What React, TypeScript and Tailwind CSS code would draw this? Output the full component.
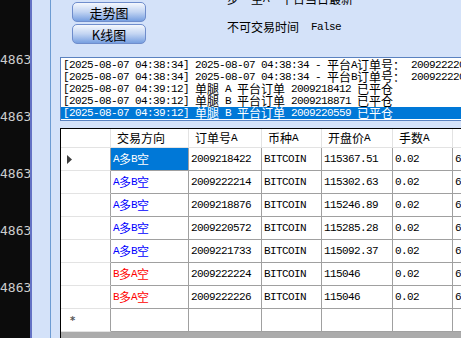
import React from 'react';

const CJK = /[\u2E80-\u9FFF\uFF00-\uFFEF]/;

// SimSun-like mixed run: CJK at 12px, ASCII as 6px-wide mono
const Sim: React.FC<{ t: string }> = ({ t }) => (
    <>
        {t.split(/([\u2E80-\u9FFF\uFF00-\uFFEF]+)/).map((s, i) =>
            s === '' ? null : CJK.test(s) ? (
                <span key={i} className="whitespace-pre font-['Noto_Sans_CJK_SC',sans-serif] text-[12px] leading-[12px]">{s}</span>
            ) : (
                <span key={i} className="whitespace-pre font-['Liberation_Mono',monospace] text-[11px] leading-[12px] tracking-[-0.6px]">{s}</span>
            )
        )}
    </>
);

const logLines = [
    '[2025-08-07 04:38:34] 2025-08-07 04:38:34 - 平台A订单号： 2009222206',
    '[2025-08-07 04:38:34] 2025-08-07 04:38:34 - 平台B订单号： 2009222207',
    '[2025-08-07 04:39:12] 单腿 A 平台订单 2009218412 已平仓',
    '[2025-08-07 04:39:12] 单腿 B 平台订单 2009218871 已平仓',
    '[2025-08-07 04:39:12] 单腿 B 平台订单 2009220559 已平仓',
];

const rows = [
    { dir: 'A多B空', red: false, id: '2009218422', price: '115367.51' },
    { dir: 'A多B空', red: false, id: '2009222214', price: '115302.63' },
    { dir: 'A多B空', red: false, id: '2009218876', price: '115246.89' },
    { dir: 'A多B空', red: false, id: '2009220572', price: '115285.28' },
    { dir: 'A多B空', red: false, id: '2009221733', price: '115092.37' },
    { dir: 'B多A空', red: true, id: '2009222224', price: '115046' },
    { dir: 'B多A空', red: true, id: '2009222226', price: '115046' },
];

const cols = 'grid grid-cols-[50px_78px_73px_60px_71px_60px_80px]';
const cell = 'border-r border-b border-[#a0a0a0] pl-[2px] flex items-center overflow-hidden';

export default function App() {
    return (
        <div className="w-[461px] h-[338px] overflow-hidden flex bg-[#d4e2f9]">
            {/* console strip */}
            <div className="w-[30px] shrink-0 bg-[#0c0c0c] overflow-hidden flex flex-col pt-[51px] gap-[39px]">
                {[0, 1, 2, 3, 4].map((i) => (
                    <div key={i} className="h-[18px] whitespace-nowrap font-['DejaVu_Sans_Mono',monospace] text-[13px] leading-[18px] text-[#cccccc]">
                        4863
                    </div>
                ))}
            </div>
            <div className="w-[2px] shrink-0 bg-[#6472c4]" />
            <div className="w-[18px] shrink-0" />
            <div className="w-px shrink-0 bg-[#6c9bd2]" />

            <div className="flex-1 min-w-0 flex flex-col">
                {/* top controls */}
                <div className="h-[57px] shrink-0 flex">
                    <div className="ml-[21px] pt-[2px] flex flex-col gap-[2px]">
                        {['走势图', 'K线图'].map((b) => (
                            <div
                                key={b}
                                className="w-[74px] h-[20px] rounded-[5px] border border-[#6f8dcc] bg-gradient-to-b from-[#f5f8fd] via-[#c2d4f2] to-[#779fe0] flex items-center justify-center font-['Noto_Sans_CJK_SC',sans-serif] text-[13px] leading-[13px] text-black"
                            >
                                {b}
                            </div>
                        ))}
                    </div>
                    <div className="ml-[81px] flex flex-col">
                        <div className="-mt-[7px] h-[12px] flex items-center text-black">
                            <Sim t="步  至A  平台当日最新" />
                        </div>
                        <div className="mt-[16px] h-[12px] flex items-center text-black">
                            <Sim t="不可交易时间  False" />
                        </div>
                    </div>
                </div>

                {/* log list */}
                <div className="ml-[9px] h-[64px] shrink-0 border border-r-0 border-[#5a82c0] bg-white pt-px overflow-hidden">
                    {logLines.map((l, i) => (
                        <div
                            key={i}
                            className={`h-[12px] pl-[2px] flex items-center overflow-hidden ${i === 4 ? 'bg-[#0078d7] text-white' : 'text-black'}`}
                        >
                            <Sim t={l} />
                        </div>
                    ))}
                </div>

                {/* data grid */}
                <div className="mt-[7px] ml-[9px] flex-1 border-l border-t border-black bg-[#ababab] overflow-hidden">
                    <div className={`${cols} h-[19px] bg-white`}>
                        <div className="border-r border-b border-[#e3e3e3]" />
                        {['交易方向', '订单号A', '币种A', '开盘价A', '手数A', ' 平仓价B'].map((h) => (
                            <div key={h} className="border-r border-b border-[#e3e3e3] pl-[6px] flex items-center overflow-hidden text-black">
                                <Sim t={h} />
                            </div>
                        ))}
                    </div>
                    {rows.map((r, i) => (
                        <div key={i} className={`${cols} h-[23px] bg-white`}>
                            <div className="border-r border-b border-[#e3e3e3] border-r-[#a0a0a0] flex items-center pl-[6px]">
                                {i === 0 && (
                                    <svg width="6" height="9" viewBox="0 0 6 9">
                                        <path d="M0 0 L5 4.5 L0 9 Z" fill="#3c3c3c" />
                                    </svg>
                                )}
                            </div>
                            <div className={`${cell} ${i === 0 ? 'bg-[#0078d7] text-white' : r.red ? 'text-[#ff0000]' : 'text-[#0000ff]'}`}>
                                <Sim t={r.dir} />
                            </div>
                            <div className={`${cell} text-black`}><Sim t={r.id} /></div>
                            <div className={`${cell} text-black`}><Sim t="BITCOIN" /></div>
                            <div className={`${cell} text-black`}><Sim t={r.price} /></div>
                            <div className={`${cell} text-black`}><Sim t="0.02" /></div>
                            <div className={`${cell} text-black`}><Sim t="66.8" /></div>
                        </div>
                    ))}
                    <div className={`${cols} h-[23px] bg-white`}>
                        <div className="border-r border-b border-[#e3e3e3] border-r-[#a0a0a0] flex items-center pl-[9px] font-['DejaVu_Sans',sans-serif] text-[10px] font-bold text-[#555]">
                            *
                        </div>
                        {[0, 1, 2, 3, 4, 5].map((k) => (
                            <div key={k} className={cell} />
                        ))}
                    </div>
                </div>
            </div>
        </div>
    );
}
